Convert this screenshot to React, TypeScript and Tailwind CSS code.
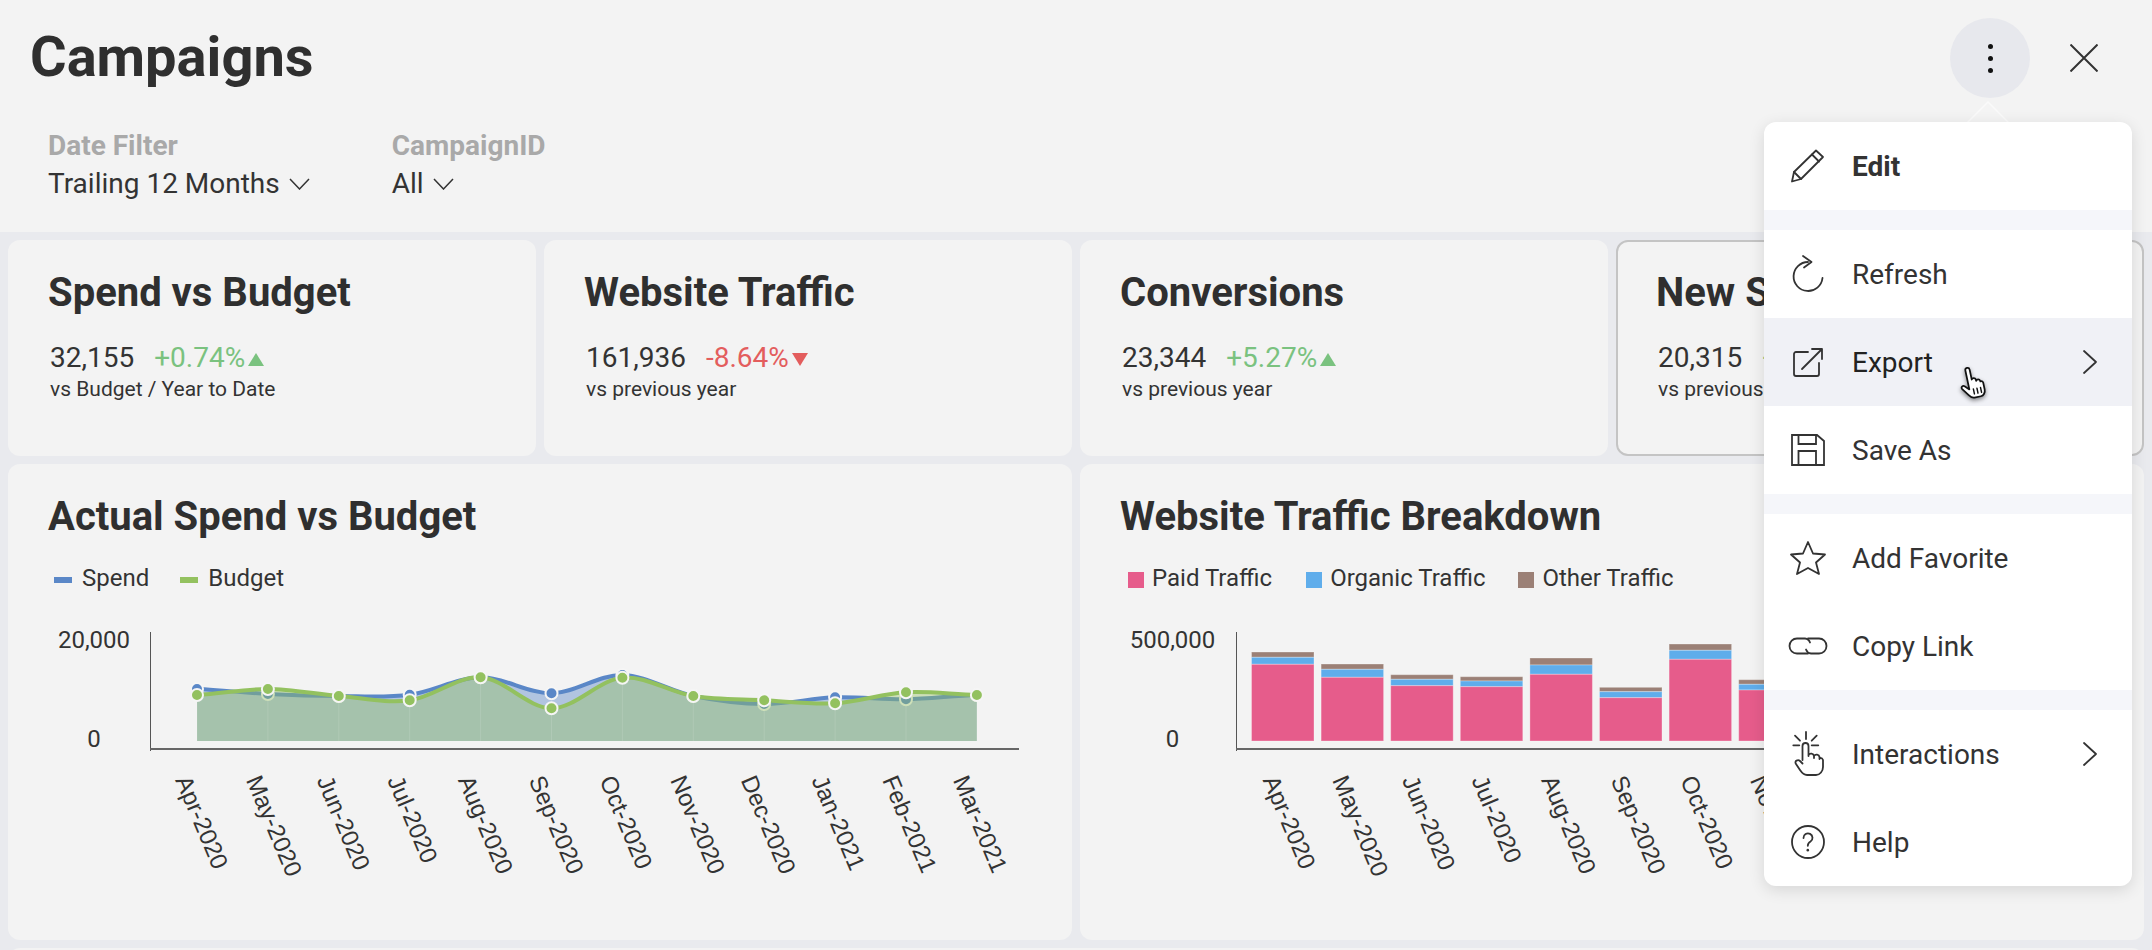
import { ReactNode } from 'react';

const months = ['Apr-2020', 'May-2020', 'Jun-2020', 'Jul-2020', 'Aug-2020', 'Sep-2020', 'Oct-2020', 'Nov-2020', 'Dec-2020', 'Jan-2021', 'Feb-2021', 'Mar-2021'];

const spend = [689, 694, 696, 694.7, 677.3, 693.3, 675, 696, 704, 697.3, 699.3, 695];
const budget = [695, 689, 696, 700.3, 677.3, 708.3, 677.7, 696, 700.3, 703.3, 692.3, 695];
const xAt = (i: number) => 197 + 70.9 * i;

// brown top, blue top, pink top
const bars = [
  [652, 657.3, 664.3],
  [664, 669.3, 677.3],
  [674.7, 679.3, 685.7],
  [676.7, 681, 686.7],
  [658, 665, 674.3],
  [687.3, 691.7, 697.7],
  [644, 650.3, 659.3],
  [679.7, 684.3, 690],
  [682, 687, 694],
  [672, 678, 686],
  [668, 674, 682],
  [664, 670, 678],
];

const smooth = (ys: number[]) => {
  let d = `M${xAt(0)} ${ys[0]}`;
  for (let i = 0; i < ys.length - 1; i++) {
    const prev = ys[Math.max(i - 1, 0)];
    const next = ys[Math.min(i + 2, ys.length - 1)];
    const dx = 70.9 / 3;
    d += ` C${xAt(i) + dx} ${ys[i] + (ys[i + 1] - prev) / 6} ${xAt(i + 1) - dx} ${ys[i + 1] - (next - ys[i]) / 6} ${xAt(i + 1)} ${ys[i + 1]}`;
  }
  return d;
};
const closed = (d: string) => `${d} L${xAt(11)} 741 L${xAt(0)} 741 Z`;

const Up = () => (
  <svg width="16" height="13" viewBox="0 0 16 13" className="ml-[3px] mt-[3px]">
    <polygon points="8,0 16,13 0,13" fill="#7ac27f" />
  </svg>
);
const Down = () => (
  <svg width="16" height="13" viewBox="0 0 16 13" className="ml-[3px] mt-[3px]">
    <polygon points="0,0 16,0 8,13" fill="#e35d5d" />
  </svg>
);

const KpiCard = ({ title, value, delta, up, sub, outlined }: { title: string; value: string; delta: string; up: boolean; sub: string; outlined?: boolean }) => (
  <div className={`h-[216px] rounded-[12px] bg-[#f3f3f3] ${outlined ? 'border-2 border-[#c4c4c4] pl-[38px] pt-[28px]' : 'pl-[40px] pt-[30px]'}`}>
    <div className="text-[40px] leading-[46px] font-bold text-[#2f2f2f] whitespace-nowrap">{title}</div>
    <div className="mt-[26px] ml-[2px] flex items-center text-[28px] leading-[32px] text-[#333] whitespace-nowrap">
      <span>{value}</span>
      <span className={`ml-[20px] ${up ? 'text-[#7ac27f]' : 'text-[#e35d5d]'}`}>{delta}</span>
      {up ? <Up /> : <Down />}
    </div>
    <div className="ml-[2px] mt-[2px] text-[21px] leading-[26px] text-[#333] whitespace-nowrap">{sub}</div>
  </div>
);

const ChartCard = ({ title, legend, chart }: { title: string; legend: ReactNode; chart: ReactNode }) => (
  <div className="h-[476px] rounded-[12px] bg-[#f3f3f3] pt-[33px] overflow-hidden">
    <div className="pl-[40px] text-[40px] leading-[40px] font-bold text-[#2f2f2f]">{title}</div>
    <div className="mt-[25px] h-[32px] flex items-center text-[24px] text-[#333]">{legend}</div>
    <div className="mt-[6px]">{chart}</div>
  </div>
);

const AxisLabels = ({ start, step }: { start: number; step: number }) => (
  <>
    {months.map((m, i) => (
      <text key={m} transform={`translate(${start + step * i} 780) rotate(67)`} fontSize="24" fill="#333" fontFamily="'Liberation Sans', sans-serif">{m}</text>
    ))}
  </>
);

const SpendChart = () => {
  const s = smooth(spend);
  const b = smooth(budget);
  return (
    <svg width="1064" height="340" viewBox="8 600 1064 340" className="block">
      <path d={closed(s)} fill="#5a87c7" fillOpacity="0.43" />
      <path d={s} fill="none" stroke="#5a87c7" strokeWidth="4" />
      {spend.map((y, i) => (
        <circle key={i} cx={xAt(i)} cy={y} r="6" fill="#5a87c7" stroke="#f5f5f5" strokeWidth="2" />
      ))}
      <path d={closed(b)} fill="#93c15f" fillOpacity="0.4" />
      <path d={b} fill="none" stroke="#93c15f" strokeWidth="4" />
      {budget.map((y, i) => (
        <line key={i} x1={xAt(i)} x2={xAt(i)} y1={Math.max(y, spend[i]) + 7} y2="741" stroke="#fff" strokeOpacity="0.12" />
      ))}
      {budget.map((y, i) => (
        <circle key={i} cx={xAt(i)} cy={y} r="6" fill="#93c15f" stroke="#f5f5f5" strokeWidth="2" />
      ))}
      <line x1="150.5" x2="150.5" y1="632" y2="751" stroke="#555" />
      <line x1="150" x2="1019" y1="749" y2="749" stroke="#666" strokeWidth="2" />
      <text x="94" y="648" textAnchor="middle" fontSize="24" fill="#333">20,000</text>
      <text x="94" y="747" textAnchor="middle" fontSize="24" fill="#333">0</text>
      <AxisLabels start={175} step={70.7} />
    </svg>
  );
};

const TrafficChart = () => (
  <svg width="1064" height="340" viewBox="1080 600 1064 340" className="block">
    {bars.map(([brown, blue, pink], i) => {
      const x = 1251.5 + 69.6 * i;
      return (
        <g key={i} stroke="#fff" strokeOpacity="0.3">
          <rect x={x} y={brown} width="62.5" height={blue - brown} fill="#9b8076" />
          <rect x={x} y={blue} width="62.5" height={pink - blue} fill="#5fadeb" />
          <rect x={x} y={pink} width="62.5" height={741 - pink} fill="#e65c8b" />
        </g>
      );
    })}
    <line x1="1236.5" x2="1236.5" y1="632" y2="751" stroke="#555" />
    <line x1="1236" x2="2105" y1="749" y2="749" stroke="#666" strokeWidth="2" />
    <text x="1172.5" y="648" textAnchor="middle" fontSize="24" fill="#333">500,000</text>
    <text x="1172.5" y="747" textAnchor="middle" fontSize="24" fill="#333">0</text>
    <AxisLabels start={1262.5} step={69.6} />
  </svg>
);

const Chevron = () => (
  <svg width="21" height="12" viewBox="0 0 21 12" fill="none" stroke="#333" strokeWidth="1.5">
    <path d="M1 1 L10.5 11 L20 1" />
  </svg>
);

const iconProps = { fill: 'none', stroke: '#333', strokeWidth: 1.8, strokeLinejoin: 'round' as const, strokeLinecap: 'round' as const };

const PencilIcon = () => (
  <svg width="34" height="34" viewBox="0 0 34 34" {...iconProps}>
    <path d="M1 32.5 L3 23 L25 1.5 L32 8 L10 30 Z" />
    <path d="M21 5.5 L28 12.5 M3 23 L10 30" />
  </svg>
);
const RefreshIcon = () => (
  <svg width="36" height="40" viewBox="0 0 36 40" {...iconProps}>
    <path d="M18 8 A14.5 14.5 0 1 0 32.5 24" />
    <path d="M13 2 L21.5 8 L14 13.5" />
  </svg>
);
const ExportIcon = () => (
  <svg width="40" height="40" viewBox="0 0 40 40" {...iconProps}>
    <path d="M20 10 H8 a2 2 0 0 0 -2 2 V32 a2 2 0 0 0 2 2 H29 a2 2 0 0 0 2 -2 V21" />
    <path d="M14 27 L34 7 M24 7 H34 V17" />
  </svg>
);
const SaveIcon = () => (
  <svg width="36" height="34" viewBox="0 0 36 34" {...iconProps} strokeLinejoin="miter">
    <path d="M2 2 H27 L34 8 V32 H2 Z" />
    <path d="M8.5 2 V11 H26 V2 M8.5 32 V18 H26 V32" />
  </svg>
);
const StarIcon = () => (
  <svg width="36" height="34" viewBox="0 0 36 34" {...iconProps}>
    <polygon points="18,1 23,12.5 35,13.5 26,21.5 29,33 18,27 7,33 10,21.5 1,13.5 13,12.5" />
  </svg>
);
const LinkIcon = () => (
  <svg width="40" height="22" viewBox="0 0 40 22" {...iconProps}>
    <path d="M20 18.5 H9 a7.5 7.5 0 0 1 0 -15 H17 a6 6 0 0 1 5 4" />
    <path d="M20 3.5 H31 a7.5 7.5 0 0 1 0 15 H23 a6 6 0 0 1 -5 -4" />
  </svg>
);
const handPath = 'M12.5 30 V16 a3 3 0 0 1 6 0 V26 M18.5 25 a3 3 0 0 1 5.5 1 V28 M24 26 a3 3 0 0 1 5.5 1 V29 M29.5 28 a3 3 0 0 1 3.5 2 V37 c0 4 -3 8 -7 8 H17 c-3 0 -5 -2 -7 -5 L6 34 c-2 -3 2 -5 4 -3 l2.5 2.5';
const InteractionsIcon = () => (
  <svg width="36" height="48" viewBox="0 0 36 48" {...iconProps}>
    <path d="M16 2 V9 M5 5.7 L10 10.7 M26.7 5.7 L21.7 10.7 M3.3 15.3 H9.3 M21.7 15.3 H28.3" />
    <path d={handPath} />
  </svg>
);
const HelpIcon = () => (
  <svg width="36" height="36" viewBox="0 0 36 36" {...iconProps}>
    <circle cx="18" cy="18" r="16" />
    <path d="M13.5 14 a4.5 4.5 0 1 1 7 3.6 c-2 1.2 -2.7 2.2 -2.7 4.2" />
    <path d="M17.8 26 V26.2" strokeWidth="2.6" />
  </svg>
);
const MenuChevron = () => (
  <svg width="16" height="26" viewBox="0 0 16 26" {...iconProps}>
    <path d="M2 2 L14 13 L2 24" />
  </svg>
);

const MenuRow = ({ icon, label, bold, hover, arrow }: { icon: ReactNode; label: string; bold?: boolean; hover?: boolean; arrow?: boolean }) => (
  <div className={`h-[88px] pl-[24px] pr-[34px] flex items-center text-[28px] ${hover ? 'bg-[#f0f1f6] text-[#222]' : 'text-[#333]'} ${bold ? 'font-bold' : ''}`}>
    <div className="w-[40px] flex justify-center">{icon}</div>
    <span className="ml-[24px] mt-[2px]">{label}</span>
    {arrow && <span className="ml-auto"><MenuChevron /></span>}
  </div>
);

const Sep = () => <div className="h-[20px] bg-[#f5f6fa]" />;

export default function App() {
  return (
    <div className="relative h-[950px] w-[2152px] overflow-hidden bg-[#e9eaee] [font-family:Roboto,sans-serif]">
      {/* Header */}
      <div className="h-[232px] bg-[#f3f3f3] pl-[30px] pt-[25px]">
        <h1 className="text-[56px] leading-[64px] font-bold text-[#2f2f2f]">Campaigns</h1>
        <div className="mt-[41px] ml-[18px] flex gap-[82px]">
          <div>
            <div className="text-[28px] leading-[32px] font-bold text-[#a9a9a9]">Date Filter</div>
            <div className="mt-[6px] flex items-center gap-[9px] text-[28px] leading-[32px] text-[#333]">Trailing 12 Months <Chevron /></div>
          </div>
          <div>
            <div className="text-[28px] leading-[32px] font-bold text-[#a9a9a9]">CampaignID</div>
            <div className="mt-[6px] flex items-center gap-[9px] text-[28px] leading-[32px] text-[#333]">All <Chevron /></div>
          </div>
        </div>
      </div>

      {/* Cards */}
      <div className="p-[8px] flex flex-col gap-[8px]">
        <div className="grid grid-cols-4 gap-[8px]">
          <KpiCard title="Spend vs Budget" value="32,155" delta="+0.74%" up sub="vs Budget / Year to Date" />
          <KpiCard title="Website Traffic" value="161,936" delta="-8.64%" up={false} sub="vs previous year" />
          <KpiCard title="Conversions" value="23,344" delta="+5.27%" up sub="vs previous year" />
          <KpiCard title="New Subscribers" value="20,315" delta="+3.18%" up sub="vs previous year" outlined />
        </div>
        <div className="grid grid-cols-2 gap-[8px]">
          <ChartCard
            title="Actual Spend vs Budget"
            legend={
              <>
                <span className="ml-[46px] h-[6px] w-[18px] bg-[#5a87c7] mt-[4px]" />
                <span className="ml-[10px]">Spend</span>
                <span className="ml-[31px] h-[6px] w-[18px] bg-[#93c15f] mt-[4px]" />
                <span className="ml-[10px]">Budget</span>
              </>
            }
            chart={<SpendChart />}
          />
          <ChartCard
            title="Website Traffic Breakdown"
            legend={
              <>
                <span className="ml-[48px] h-[16px] w-[16px] bg-[#e65c8b] mt-[4px]" />
                <span className="ml-[8px]">Paid Traffic</span>
                <span className="ml-[34px] h-[16px] w-[16px] bg-[#5fadeb] mt-[4px]" />
                <span className="ml-[8px]">Organic Traffic</span>
                <span className="ml-[33px] h-[16px] w-[16px] bg-[#9b8076] mt-[4px]" />
                <span className="ml-[8px]">Other Traffic</span>
              </>
            }
            chart={<TrafficChart />}
          />
        </div>
        <div className="h-[200px] rounded-[12px] bg-[#f3f3f3]" />
      </div>

      {/* Kebab and close */}
      <div className="absolute left-[1950px] top-[18px] flex h-[80px] w-[80px] flex-col items-center justify-center gap-[7px] rounded-full bg-[#e7e8ed]">
        <span className="h-[5px] w-[5px] rounded-full bg-[#111]" />
        <span className="h-[5px] w-[5px] rounded-full bg-[#111]" />
        <span className="h-[5px] w-[5px] rounded-full bg-[#111]" />
      </div>
      <svg className="absolute left-[2070px] top-[44px]" width="28" height="28" viewBox="0 0 28 28" fill="none" stroke="#333" strokeWidth="2">
        <path d="M0.5 0.5 L27.5 27.5 M27.5 0.5 L0.5 27.5" />
      </svg>

      {/* Menu */}
      <svg className="absolute left-[1966px] top-[101px]" width="44" height="22" viewBox="0 0 44 22">
        <path d="M1 22 L22 1 L43 22 Z" fill="#f4f4f4" stroke="#fafafa" strokeWidth="1.5" />
      </svg>
      <div className="absolute left-[1764px] top-[122px] w-[368px] overflow-hidden rounded-[12px] bg-white shadow-[0_4px_16px_rgba(0,0,0,0.12)]">
        <MenuRow icon={<PencilIcon />} label="Edit" bold />
        <Sep />
        <MenuRow icon={<RefreshIcon />} label="Refresh" />
        <MenuRow icon={<ExportIcon />} label="Export" hover arrow />
        <MenuRow icon={<SaveIcon />} label="Save As" />
        <Sep />
        <MenuRow icon={<StarIcon />} label="Add Favorite" />
        <MenuRow icon={<LinkIcon />} label="Copy Link" />
        <Sep />
        <MenuRow icon={<InteractionsIcon />} label="Interactions" arrow />
        <MenuRow icon={<HelpIcon />} label="Help" />
      </div>

      {/* Mouse pointer */}
      <svg className="absolute left-[1956px] top-[365px] drop-shadow-[0_2px_2px_rgba(0,0,0,0.45)]" width="32" height="35" viewBox="0 0 36 48" strokeLinejoin="round" strokeLinecap="round">
        <g transform="rotate(-12 18 24)">
          <path d="M12.5 30 V6 a3 3 0 0 1 6 0 V20 a3 3 0 0 1 5.5 1 V23 a3 3 0 0 1 5.5 1 V25 a3 3 0 0 1 3.5 2 V37 c0 4 -3 8 -7 8 H17 c-3 0 -5 -2 -7 -5 L3 30 c-2 -3 2 -5 4 -3 l5.5 5.5 Z" fill="#fff" stroke="#111" strokeWidth="2.4" />
          <path d="M18 33 V40 M23 33 V40 M28 33 V40" fill="none" stroke="#111" strokeWidth="2" />
        </g>
      </svg>
    </div>
  );
}
